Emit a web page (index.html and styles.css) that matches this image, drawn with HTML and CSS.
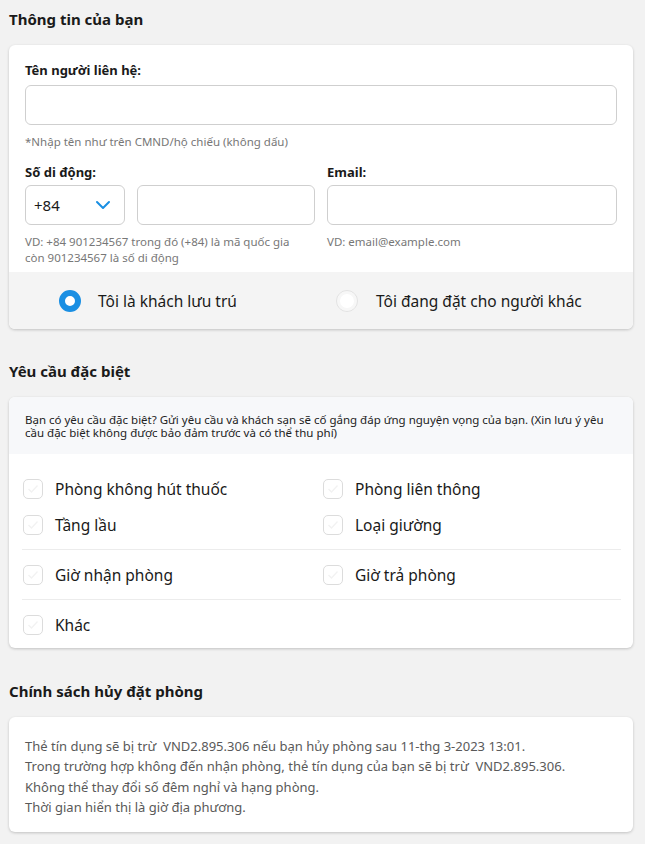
FILE: index.html
```html
<!DOCTYPE html>
<html lang="vi">
<head>
<meta charset="utf-8">
<link rel="stylesheet" href="styles.css">
</head>
<body>
<div class="page">
  <h2 class="section-title">Thông tin của bạn</h2>
  <div class="card">
    <div class="card-body">
      <div class="field">
        <label class="label">Tên người liên hệ:</label>
        <div class="input"></div>
        <div class="hint first">*Nhập tên như trên CMND/hộ chiếu (không dấu)</div>
      </div>
      <div class="row2">
        <div class="field">
          <label class="label">Số di động:</label>
          <div class="phone">
            <div class="input select"><span>+84</span>
              <svg width="16" height="10" viewBox="0 0 16 10"><path d="M2 2l6 6 6-6" fill="none" stroke="#1a8fe3" stroke-width="2" stroke-linecap="round" stroke-linejoin="round"/></svg>
            </div>
            <div class="input grow"></div>
          </div>
          <div class="hint narrow">VD: +84 901234567 trong đó (+84) là mã quốc gia còn 901234567 là số di động</div>
        </div>
        <div class="field">
          <label class="label">Email:</label>
          <div class="input"></div>
          <div class="hint">VD: email@example.com</div>
        </div>
      </div>
    </div>
    <div class="radios">
      <div class="radio-item"><span class="radio on"></span>Tôi là khách lưu trú</div>
      <div class="radio-item"><span class="radio"></span>Tôi đang đặt cho người khác</div>
    </div>
  </div>

  <h2 class="section-title">Yêu cầu đặc biệt</h2>
  <div class="card card-req">
    <div class="note">Bạn có yêu cầu đặc biệt? Gửi yêu cầu và khách sạn sẽ cố gắng đáp ứng nguyện vọng của bạn. (Xin lưu ý yêu cầu đặc biệt không được bảo đảm trước và có thể thu phí)</div>
    <div class="checks">
      <div class="check-group">
        <div class="check"><span class="box"><svg width="12" height="10" viewBox="0 0 12 10"><path d="M1.5 5l3 3 6-6.5" fill="none" stroke="#f2f2f2" stroke-width="1.3"/></svg></span>Phòng không hút thuốc</div>
        <div class="check"><span class="box"><svg width="12" height="10" viewBox="0 0 12 10"><path d="M1.5 5l3 3 6-6.5" fill="none" stroke="#f2f2f2" stroke-width="1.3"/></svg></span>Phòng liên thông</div>
        <div class="check"><span class="box"><svg width="12" height="10" viewBox="0 0 12 10"><path d="M1.5 5l3 3 6-6.5" fill="none" stroke="#f2f2f2" stroke-width="1.3"/></svg></span>Tầng lầu</div>
        <div class="check"><span class="box"><svg width="12" height="10" viewBox="0 0 12 10"><path d="M1.5 5l3 3 6-6.5" fill="none" stroke="#f2f2f2" stroke-width="1.3"/></svg></span>Loại giường</div>
      </div>
      <div class="check-group">
        <div class="check"><span class="box"><svg width="12" height="10" viewBox="0 0 12 10"><path d="M1.5 5l3 3 6-6.5" fill="none" stroke="#f2f2f2" stroke-width="1.3"/></svg></span>Giờ nhận phòng</div>
        <div class="check"><span class="box"><svg width="12" height="10" viewBox="0 0 12 10"><path d="M1.5 5l3 3 6-6.5" fill="none" stroke="#f2f2f2" stroke-width="1.3"/></svg></span>Giờ trả phòng</div>
      </div>
      <div class="check-group last">
        <div class="check"><span class="box"><svg width="12" height="10" viewBox="0 0 12 10"><path d="M1.5 5l3 3 6-6.5" fill="none" stroke="#f2f2f2" stroke-width="1.3"/></svg></span>Khác</div>
      </div>
    </div>
  </div>

  <h2 class="section-title">Chính sách hủy đặt phòng</h2>
  <div class="card policy">
    <p>Thẻ tín dụng sẽ bị trừ&nbsp; VND2.895.306 nếu bạn hủy phòng sau 11-thg 3-2023 13:01.</p>
    <p>Trong trường hợp không đến nhận phòng, thẻ tín dụng của bạn sẽ bị trừ&nbsp; VND2.895.306.</p>
    <p>Không thể thay đổi số đêm nghỉ và hạng phòng.</p>
    <p>Thời gian hiển thị là giờ địa phương.</p>
  </div>
</div>
</body>
</html>
```

FILE: styles.css
```css
* { box-sizing: border-box; }
html, body { margin: 0; padding: 0; }
body {
  background: #f2f2f2;
  font-family: "Noto Sans", "Open Sans", sans-serif;
  color: #1a1a1a;
}
.page { padding: 8px 12px 0 9px; }
.section-title {
  font-size: 15px;
  font-weight: 700;
  margin: 0;
  padding: 0 0 15px;
  line-height: 22px;
}
.card {
  background: #fff;
  border-radius: 6px;
  box-shadow: 0 1px 3px rgba(0,0,0,0.2);
  overflow: hidden;
  margin-bottom: 31px;
}
.card-req { margin-bottom: 32px; }
.card-body { padding: 16px 16px 6px; }
.field { display: flex; flex-direction: column; }
.label { font-size: 13px; font-weight: 700; line-height: 18px; margin-bottom: 6px; }
.row2 .label { margin-bottom: 4px; }
.input {
  height: 40px;
  border: 1px solid #cfcfcf;
  border-radius: 6px;
  background: #fff;
}
.hint { font-size: 11.5px; color: #777; line-height: 16px; margin-top: 9px; }
.hint.first { margin-bottom: 13px; }
.hint.narrow { padding-right: 12px; }
.row2 { display: grid; grid-template-columns: 290px 1fr; gap: 12px; }
.phone { display: flex; gap: 12px; }
.select { width: 100px; display: flex; align-items: center; justify-content: space-between; padding: 0 13px 0 8px; font-size: 15px; }
.grow { flex: 1; }
.radios {
  background: #f4f4f4;
  display: grid;
  grid-template-columns: 277px 1fr;
  height: 57px;
  align-items: center;
  padding-left: 50px;
  font-size: 15.5px;
}
.radio-item { display: flex; align-items: center; gap: 17px; }
.radio {
  width: 22px; height: 22px; border-radius: 50%;
  border: 1px solid #e2e2e2; background: #fff;
  box-shadow: inset 0 0 0 3px #f7f7f7;
}
.radio.on { border: 6px solid #1a8fe3; box-shadow: none; }
.radios .radio-item:nth-child(2) { gap: 18px; }
.note {
  background: #f7f8fa;
  font-size: 11.5px;
  line-height: 13px;
  padding: 16px 16px 15px;
  color: #222;
}
.checks { padding: 10px 12px 0 13px; }
.check-group {
  display: grid;
  grid-template-columns: 300px 1fr;
  row-gap: 10px;
  border-bottom: 1px solid #ececec;
  padding: 12px 0 11px;
}
.check-group.last { border-bottom: none; padding-bottom: 10px; }
.check { display: flex; align-items: center; gap: 12px; font-size: 15.5px; height: 26px; }
.box {
  width: 20px; height: 20px; border-radius: 5px;
  border: 1px solid #dcdcdc; margin-left: 1px;
  display: flex; align-items: center; justify-content: center;
}
.policy { padding: 19px 16px 15px; }
.policy p { margin: 0; font-size: 13px; line-height: 20.3px; color: #595959; }
```
